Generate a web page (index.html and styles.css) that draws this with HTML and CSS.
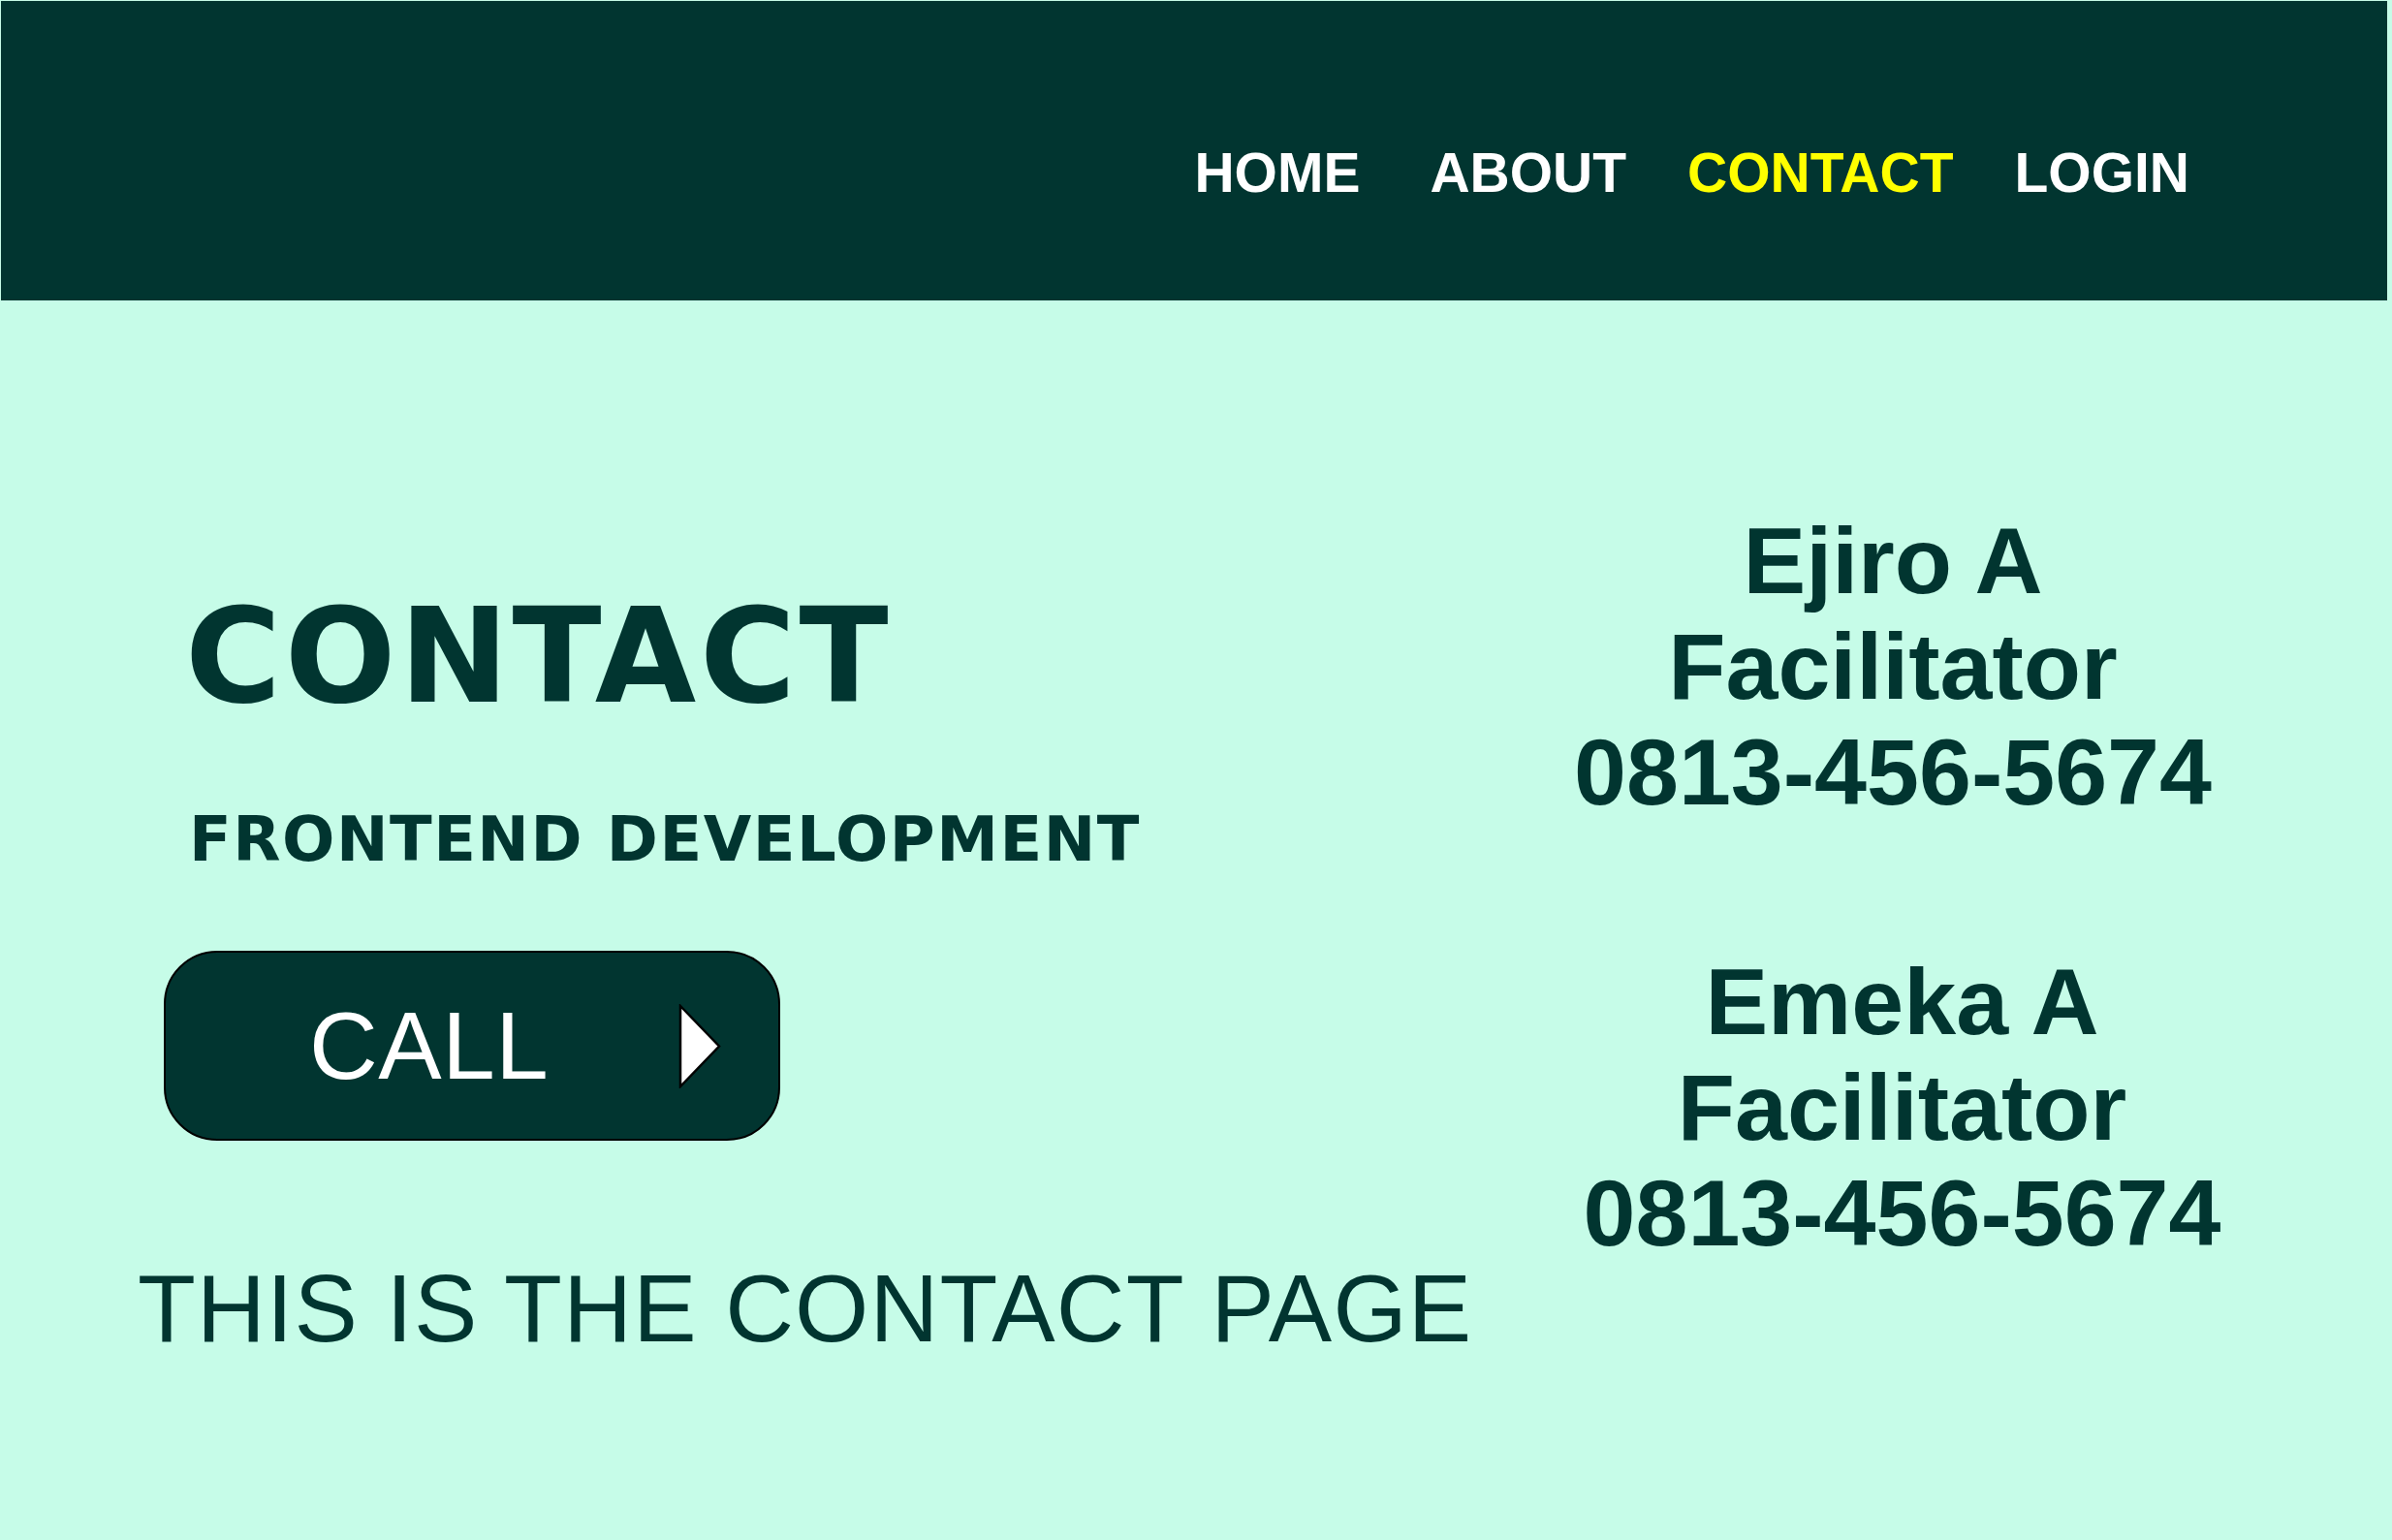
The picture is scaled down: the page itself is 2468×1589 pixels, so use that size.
FILE: index.html
```html
<!DOCTYPE html>
<html lang="en">
<head>
<meta charset="utf-8">
<title>Contact</title>
<link rel="stylesheet" href="styles.css">
</head>
<body>
<header class="topbar">
  <nav class="nav">
    <a class="nav-link nav-link-first" href="#">HOME</a>
    <a class="nav-link" href="#">ABOUT</a>
    <a class="nav-link nav-link-active" href="#">CONTACT</a>
    <a class="nav-link" href="#">LOGIN</a>
  </nav>
</header>
<main class="main">
  <section class="intro">
    <h1 class="title">CONTACT</h1>
    <h2 class="subtitle">FRONTEND DEVELOPMENT</h2>
    <button class="call-btn" type="button">
      <span class="call-label">CALL</span>
      <svg class="call-arrow" width="44" height="87" viewBox="0 0 44 87" aria-hidden="true">
        <polygon points="2,2 42,43.5 2,85" fill="#ffffff" stroke="#000000" stroke-width="2.5" stroke-linejoin="miter"/>
      </svg>
    </button>
    <p class="tagline">THIS IS THE CONTACT PAGE</p>
  </section>
  <section class="people">
    <div class="person">
      <div class="person-line">Ejiro A</div>
      <div class="person-line">Facilitator</div>
      <div class="person-line">0813-456-5674</div>
    </div>
    <div class="person person-second">
      <div class="person-line">Emeka A</div>
      <div class="person-line">Facilitator</div>
      <div class="person-line">0813-456-5674</div>
    </div>
  </section>
</main>
</body>
</html>
```

FILE: styles.css
```css
html, body {
  margin: 0;
  padding: 0;
}

body {
  background: #c6fce8;
  width: 2468px;
  height: 1589px;
  overflow: hidden;
  font-family: "Liberation Sans", Arial, sans-serif;
  color: #013530;
}

.topbar {
  box-sizing: border-box;
  height: 309px;
  margin: 1px 5px 0 1px;
  background: #013530;
  padding: 149px 204px 0 0;
}

.nav {
  display: flex;
  justify-content: flex-end;
  gap: 63px;
}

.nav-link {
  font-family: "Liberation Sans", Arial, sans-serif;
  font-weight: 700;
  font-size: 57px;
  line-height: 57px;
  color: #ffffff;
  text-decoration: none;
}

.nav-link-first {
  margin-right: 9px;
}

.nav-link-active {
  color: #ffff00;
}

.main {
  display: flex;
  align-items: flex-start;
}

.intro {
  flex: 1;
  display: flex;
  flex-direction: column;
  align-items: flex-start;
  padding: 299px 0 0 142px;
}

.title {
  margin: 0 0 0 49px;
  font-family: "DejaVu Sans", sans-serif;
  font-weight: 700;
  font-size: 135px;
  line-height: 137px;
  letter-spacing: 3.6px;
}

.subtitle {
  margin: 88px 0 0 53px;
  font-family: "DejaVu Sans", sans-serif;
  font-weight: 700;
  font-size: 64px;
  line-height: 64px;
  letter-spacing: 1.5px;
}

.call-btn {
  box-sizing: border-box;
  display: flex;
  align-items: center;
  width: 636px;
  height: 196px;
  margin: 83px 0 0 27px;
  padding: 0 0 0 148px;
  background: #013530;
  border: 2px solid #000000;
  border-radius: 55px;
  cursor: pointer;
}

.call-label {
  font-family: "Liberation Sans", Arial, sans-serif;
  font-weight: 400;
  font-size: 98px;
  line-height: 98px;
  color: #ffffff;
  letter-spacing: 0.5px;
}

.call-arrow {
  display: block;
  margin-left: 134px;
}

.tagline {
  margin: 124px 0 0 0;
  font-family: "Liberation Sans", Arial, sans-serif;
  font-weight: 400;
  font-size: 98px;
  line-height: 98px;
  letter-spacing: 1.2px;
  white-space: nowrap;
}

.people {
  width: 820px;
  margin-right: 105px;
  padding-top: 214px;
  text-align: center;
}

.person-line {
  font-family: "Liberation Sans", Arial, sans-serif;
  font-weight: 700;
  font-size: 97px;
  line-height: 109px;
}

.person-second {
  margin-top: 128px;
  padding-left: 19px;
}
```
